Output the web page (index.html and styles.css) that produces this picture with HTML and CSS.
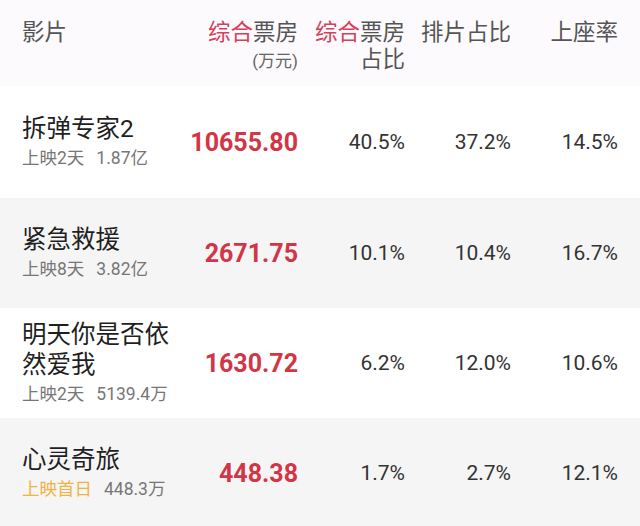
FILE: index.html
```html
<!DOCTYPE html>
<html lang="zh-CN">
<head>
<meta charset="utf-8">
<link rel="stylesheet" href="styles.css">
</head>
<body>
<div class="table">
  <div class="row head">
    <div class="c film">影片</div>
    <div class="c num"><span class="red">综合</span>票房<br><span class="unit">(万元)</span></div>
    <div class="c pct"><span class="red">综合</span>票房占比</div>
    <div class="c pct">排片占比</div>
    <div class="c pct">上座率</div>
  </div>
  <div class="row first-row">
    <div class="c film"><div class="title">拆弹专家2</div><div class="sub"><span>上映2天</span><span class="amt">1.87亿</span></div></div>
    <div class="c num box">10655.80</div>
    <div class="c pct val">40.5%</div>
    <div class="c pct val">37.2%</div>
    <div class="c pct val">14.5%</div>
  </div>
  <div class="row gray">
    <div class="c film"><div class="title">紧急救援</div><div class="sub"><span>上映8天</span><span class="amt">3.82亿</span></div></div>
    <div class="c num box">2671.75</div>
    <div class="c pct val">10.1%</div>
    <div class="c pct val">10.4%</div>
    <div class="c pct val">16.7%</div>
  </div>
  <div class="row">
    <div class="c film"><div class="title">明天你是否依然爱我</div><div class="sub"><span>上映2天</span><span class="amt">5139.4万</span></div></div>
    <div class="c num box">1630.72</div>
    <div class="c pct val">6.2%</div>
    <div class="c pct val">12.0%</div>
    <div class="c pct val">10.6%</div>
  </div>
  <div class="row gray">
    <div class="c film"><div class="title">心灵奇旅</div><div class="sub"><span class="first">上映首日</span><span class="amt">448.3万</span></div></div>
    <div class="c num box">448.38</div>
    <div class="c pct val">1.7%</div>
    <div class="c pct val">2.7%</div>
    <div class="c pct val">12.1%</div>
  </div>
</div>
</body>
</html>
```
FILE: styles.css
```css
html, body {
  margin: 0;
  padding: 0;
  background: #ffffff;
}
body {
  width: 640px;
  height: 526px;
  overflow: hidden;
  font-family: "Roboto", "Noto Sans CJK SC", sans-serif;
}
.row {
  display: grid;
  grid-template-columns: 160px 116px 107px 106px 107px;
  padding: 0 22px;
  height: 110px;
  align-items: center;
  background: #ffffff;
}
.row.first-row {
  height: 112px;
}
.row.gray {
  background: #f5f5f5;
}
.row.head {
  height: 86px;
  align-items: start;
  padding-top: 19px;
  box-sizing: border-box;
  background: #fcfafc;
  color: #555555;
  font-size: 22.5px;
  line-height: 27px;
}
.c {
  min-width: 0;
}
.num, .pct {
  text-align: right;
}
.red {
  color: #d6405a;
}
.unit {
  font-size: 17px;
  color: #666666;
  line-height: 24px;
}
.title {
  font-size: 24.5px;
  line-height: 30px;
  color: #1f1f1f;
}
.sub {
  margin-top: 1px;
  font-size: 17.5px;
  line-height: 26px;
  color: #777777;
}
.sub .amt {
  margin-left: 12px;
}
.sub .first {
  color: #efb341;
}
.box {
  font-size: 25px;
  font-weight: 700;
  color: #d23545;
}
.val {
  font-size: 21px;
  color: #333333;
}
```
